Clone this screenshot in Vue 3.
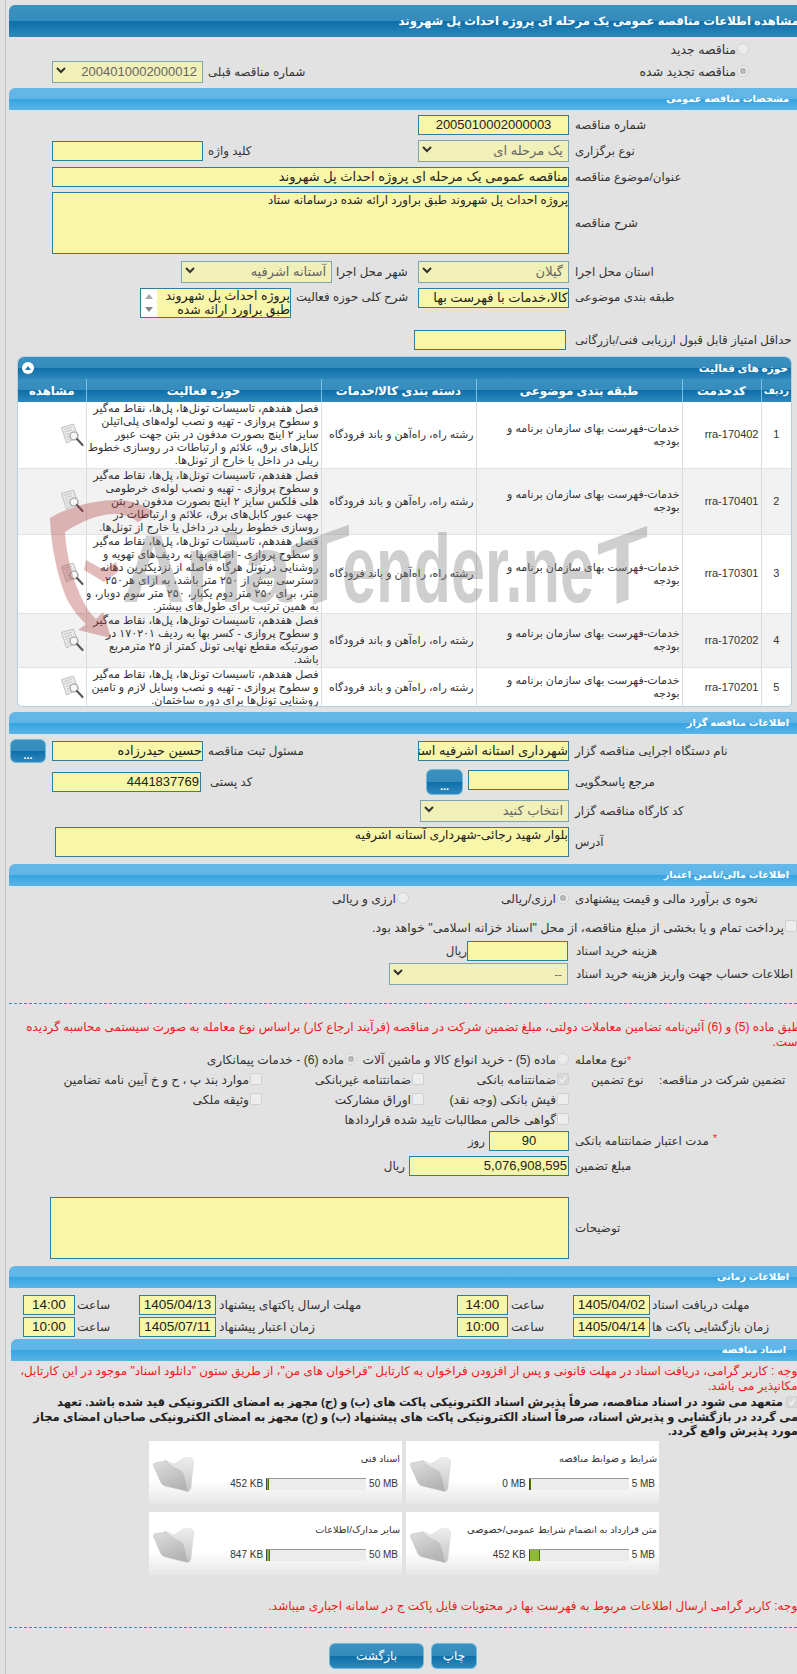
<script setup>
const f1 = 'فصل هفدهم، تاسیسات تونل‌ها، پل‌ها، نقاط مه‌گیر'
const rows = [
  { no: 1, code: 'rra-170402', cls: 'h1', lines: [f1, 'و سطوح پروازی - تهیه و نصب لوله‌های پلی‌اتیلن', 'سایز ۲ اینچ بصورت مدفون در بتن جهت عبور', 'کابل‌های برق، علائم و ارتباطات در روسازی خطوط', 'ریلی در داخل یا خارج از تونل‌ها.'] },
  { no: 2, code: 'rra-170401', cls: 'h1 alt', lines: [f1, 'و سطوح پروازی - تهیه و نصب لوله‌ی خرطومی', 'هلی فلکس سایز ۲ اینچ بصورت مدفون در بتن', 'جهت عبور کابل‌های برق، علائم و ارتباطات در', 'روسازی خطوط ریلی در داخل یا خارج از تونل‌ها.'] },
  { no: 3, code: 'rra-170301', cls: 'h2', lines: [f1, 'و سطوح پروازی - اضافه‌بها به ردیف‌های تهویه و', 'روشنایی درتونل هرگاه فاصله از نزدیکترین دهانه', 'دسترسی بیش از ۲۵۰ متر باشد، به ازای هر۲۵۰', 'متر، برای ۲۵۰ متر دوم یکبار، ۲۵۰ متر سوم دوبار، و', 'به همین ترتیب برای طول‌های بیشتر.'] },
  { no: 4, code: 'rra-170202', cls: 'h3 alt', lines: [f1, 'و سطوح پروازی - کسر بها به ردیف ۱۷۰۲۰۱ در', 'صورتیکه مقطع نهایی تونل کمتر از ۲۵ مترمربع', 'باشد.'] },
  { no: 5, code: 'rra-170201', cls: 'h4', lines: [f1, 'و سطوح پروازی - تهیه و نصب وسایل لازم و تامین', 'روشنایی تونل‌ها برای دوره ساختمان.'] }
]
const cards = [
  { t: 'اسناد فنی', cur: '452 KB', max: '50 MB', pct: 1 },
  { t: 'شرایط و ضوابط مناقصه', cur: '0 MB', max: '5 MB', pct: 0 },
  { t: 'سایر مدارک/اطلاعات', cur: '847 KB', max: '50 MB', pct: 2 },
  { t: 'متن قرارداد به انضمام شرایط عمومی/خصوصی', cur: '452 KB', max: '5 MB', pct: 9 }
]
</script>

<template>
  <div class="page">
    <div class="hd-main">مشاهده اطلاعات مناقصه عمومی یک مرحله ای پروژه احداث پل شهروند</div>

    <div class="two r-top mt4">
      <label class="c6 opt top-opt"><input class="rd" type="radio" disabled /><span>مناقصه جدید</span></label>
    </div>
    <div class="two mt2">
      <div class="c2 ctl sel num"><svg class="chev" viewBox="0 0 10 7"><path d="M1 1l4 4 4-4" /></svg><span>2004010002000012</span></div>
      <div class="c3 lb pl5">شماره مناقصه قبلی</div>
      <label class="c6 opt top-opt"><input class="rd" type="radio" disabled checked /><span>مناقصه تجدید شده</span></label>
    </div>

    <div class="hd-sec mt5">مشخصات مناقصه عمومی</div>

    <div class="two mt5">
      <div class="c4 ctl inp num ctr">2005010002000003</div>
      <div class="c6 lb">شماره مناقصه</div>
    </div>
    <div class="two mt5">
      <div class="c2 ctl inp"></div>
      <div class="c3 lb pl5">کلید واژه</div>
      <div class="c4 ctl sel big"><svg class="chev" viewBox="0 0 10 7"><path d="M1 1l4 4 4-4" /></svg><span>یک مرحله ای</span></div>
      <div class="c6 lb">نوع برگزاری</div>
    </div>
    <div class="two mt5">
      <div class="c24 ctl inp big">مناقصه عمومی یک مرحله ای پروژه احداث پل شهروند</div>
      <div class="c6 lb">عنوان/موضوع مناقصه</div>
    </div>
    <div class="two mt5">
      <div class="c24 ctl inp area62">پروژه احداث پل شهروند طبق براورد ارائه شده درسامانه ستاد</div>
      <div class="c6 lb">شرح مناقصه</div>
    </div>
    <div class="two mt7">
      <div class="c23 city">
        <div class="ctl sel big w151"><svg class="chev" viewBox="0 0 10 7"><path d="M1 1l4 4 4-4" /></svg><span>آستانه اشرفیه</span></div>
        <div class="lb">شهر محل اجرا</div>
      </div>
      <div class="c4 ctl sel big"><svg class="chev" viewBox="0 0 10 7"><path d="M1 1l4 4 4-4" /></svg><span>گیلان</span></div>
      <div class="c6 lb">استان محل اجرا</div>
    </div>
    <div class="two mt5 tops">
      <div class="c23 area-row">
        <div class="listbox">
          <div class="lb-scroll"><i class="up"></i><i class="dn"></i></div>
          <div class="lb-text"><div>پروژه احداث پل شهروند</div><div>طبق براورد ارائه شده</div></div>
        </div>
        <div class="lb lb-high">شرح کلی حوزه فعالیت</div>
      </div>
      <div class="c4 ctl inp big">کالا،خدمات با فهرست بها</div>
      <div class="c6 lb lb-high">طبقه بندی موضوعی</div>
    </div>
    <div class="two mt12">
      <div class="c4 ctl inp score"></div>
      <div class="c6 lb">حداقل امتیاز قابل قبول ارزیابی فنی/بازرگانی</div>
    </div>

    <div class="panel">
      <div class="panel-title">
        <span class="collapse"><i></i></span>
        <span>حوزه های فعالیت</span>
      </div>
      <table class="grid">
        <colgroup>
          <col class="k1" /><col class="k2" /><col class="k3" /><col class="k4" /><col class="k5" /><col class="k6" />
        </colgroup>
        <thead>
          <tr><th class="th-no">ردیف</th><th>کدخدمت</th><th>طبقه بندی موضوعی</th><th>دسته بندی کالا/خدمات</th><th>حوزه فعالیت</th><th>مشاهده</th></tr>
        </thead>
        <tbody>
          <tr v-for="r in rows" :key="r.no" :class="r.cls">
            <td class="ct">{{ r.no }}</td>
            <td class="code">{{ r.code }}</td>
            <td><div>خدمات-فهرست بهای سازمان برنامه و</div><div>بودجه</div></td>
            <td>رشته راه، راه‌آهن و باند فرودگاه</td>
            <td class="act"><div v-for="(l, i) in r.lines" :key="i">{{ l }}</div></td>
            <td class="view">
              <svg class="doc" viewBox="0 0 24 24">
                <path class="doc-sheet" d="M1.500 4.500L13.500 1l4.500 13-11.500 6z" />
                <path class="doc-line" d="M4 6.500l8-2.500M4.800 9l7-2.200M5.500 11.500l4-1.300M6.500 14l2.500-.8M7.200 16.500l2-.7" />
                <circle class="doc-lens" cx="14" cy="13" r="4" />
                <path class="doc-handle" d="M17 16l5.500 6" />
              </svg>
            </td>
          </tr>
        </tbody>
      </table>
    </div>

    <div class="hd-sec mt5">اطلاعات مناقصه گزار</div>

    <div class="two h24 mt5">
      <button class="btn-more more-a c1" type="button">...</button>
      <div class="c2 ctl inp big">حسین حیدرزاده</div>
      <div class="c3 lb pl5">مسئول ثبت مناقصه</div>
      <div class="c4 ctl inp big">شهرداری استانه اشرفیه استان گیلان</div>
      <div class="c6 lb">نام دستگاه اجرایی مناقصه گزار</div>
    </div>
    <div class="two h26 mt6">
      <div class="c2 ctl inp num postal">4441837769</div>
      <div class="c3 lb pl7">کد پستی</div>
      <div class="c4 ref">
        <button class="btn-more more-b" type="button">...</button>
        <div class="ctl inp ref-in"></div>
      </div>
      <div class="c6 lb">مرجع پاسخگویی</div>
    </div>
    <div class="two mt5">
      <div class="c4 ctl sel big wk"><svg class="chev" viewBox="0 0 10 7"><path d="M1 1l4 4 4-4" /></svg><span>انتخاب کنید</span></div>
      <div class="c6 lb">کد کارگاه مناقصه گزار</div>
    </div>
    <div class="two mt5">
      <div class="c24 ctl inp addr">بلوار شهید رجائی-شهرداری آستانه اشرفیه</div>
      <div class="c6 lb">آدرس</div>
    </div>

    <div class="hd-sec mt7">اطلاعات مالی/تامین اعتبار</div>

    <div class="two h18 mt4">
      <label class="c3 opt opt-b"><input class="rd" type="radio" disabled /><span>ارزی و ریالی</span></label>
      <label class="c4 opt"><input class="rd" type="radio" disabled checked /><span>ارزی/ریالی</span></label>
      <div class="c6 lb">نحوه ی برآورد مالی و قیمت پیشنهادی</div>
    </div>
    <div class="pay mt10">
      <span class="cb"></span>
      <span>پرداخت تمام و یا بخشی از مبلغ مناقصه، از محل "اسناد خزانه اسلامی" خواهد بود.</span>
    </div>
    <div class="two mt5">
      <div class="c4 price">
        <span class="unit">ریال</span>
        <div class="ctl inp price-in"></div>
      </div>
      <div class="c6 lb shift1">هزینه خرید اسناد</div>
    </div>
    <div class="two mt2">
      <div class="c34 ctl sel account"><svg class="chev" viewBox="0 0 10 7"><path d="M1 1l4 4 4-4" /></svg><span>--</span></div>
      <div class="c6 lb shift1">اطلاعات حساب جهت واریز هزینه خرید اسناد</div>
    </div>

    <div class="dash dash-a"></div>

    <div class="red red-top">
      <div>طبق ماده (5) و (6) آئین‌نامه تضامین معاملات دولتی، مبلغ تضمین شرکت در مناقصه (فرآیند ارجاع کار) براساس نوع معامله به صورت سیستمی محاسبه گردیده</div>
      <div>است.</div>
    </div>

    <div class="two h16 mt2">
      <div class="c24 deal">
        <label class="opt deal-a"><input class="rd" type="radio" disabled /><span>ماده (5) - خرید انواع کالا و ماشین آلات</span></label>
        <label class="opt"><input class="rd" type="radio" disabled checked /><span>ماده (6) - خدمات پیمانکاری</span></label>
      </div>
      <div class="c6 lb"><span class="star">*</span>نوع معامله</div>
    </div>

    <div class="two h16 mt4">
      <div class="c24 gtee">
        <label class="opt g1"><span class="cb on"><svg viewBox="0 0 12 12"><path d="M2.500 6.500l2.500 3 4.500-7" /></svg></span><span>ضمانتنامه بانکی</span></label>
        <label class="opt g2"><span class="cb"></span><span>ضمانتنامه غیربانکی</span></label>
        <label class="opt"><span class="cb"></span><span>موارد بند پ ، ح و خ آیین نامه تضامین</span></label>
      </div>
      <div class="c6 gt-labels">
        <span class="gt-type">نوع تضمین</span>
        <span class="gt-title">تضمین شرکت در مناقصه:</span>
      </div>
    </div>
    <div class="two h16 mt4">
      <div class="c24 gtee">
        <label class="opt g1"><span class="cb"></span><span>فیش بانکی (وجه نقد)</span></label>
        <label class="opt g2"><span class="cb"></span><span>اوراق مشارکت</span></label>
        <label class="opt"><span class="cb"></span><span>وثیقه ملکی</span></label>
      </div>
    </div>
    <div class="two h16 mt4">
      <div class="c24 gtee">
        <label class="opt"><span class="cb"></span><span>گواهی خالص مطالبات تایید شده قراردادها</span></label>
      </div>
    </div>

    <div class="two mt3">
      <div class="c34 money">
        <span class="unit">روز</span>
        <div class="ctl inp num ctr w80">90</div>
      </div>
      <div class="c6 lb"><span class="star star-b">*</span>مدت اعتبار ضمانتنامه بانکی</div>
    </div>
    <div class="two mt5">
      <div class="c34 money">
        <span class="unit">ریال</span>
        <div class="ctl inp num w160">5,076,908,595</div>
      </div>
      <div class="c6 lb">مبلغ تضمین</div>
    </div>
    <div class="two mt21">
      <div class="c24 ctl inp area62 notes"></div>
      <div class="c6 lb">توضیحات</div>
    </div>

    <div class="hd-sec mt7">اطلاعات زمانی</div>

    <div class="time mt7">
      <div class="t2 ctl inp num ctr tm">14:00</div><div class="t3 lb">ساعت</div>
      <div class="t4 ctl inp num ctr tm">1405/04/13</div><div class="t5 lb">مهلت ارسال پاکتهای پیشنهاد</div>
      <div class="t6 ctl inp num ctr tm">14:00</div><div class="t7 lb">ساعت</div>
      <div class="t8 ctl inp num ctr tm">1405/04/02</div><div class="t9 lb">مهلت دریافت اسناد</div>
    </div>
    <div class="time mt2">
      <div class="t2 ctl inp num ctr tm">10:00</div><div class="t3 lb">ساعت</div>
      <div class="t4 ctl inp num ctr tm">1405/07/11</div><div class="t5 lb">زمان اعتبار پیشنهاد</div>
      <div class="t6 ctl inp num ctr tm">10:00</div><div class="t7 lb">ساعت</div>
      <div class="t8 ctl inp num ctr tm">1405/04/14</div><div class="t9 lb">زمان بازگشایی پاکت ها</div>
    </div>

    <div class="hd-sec hd-docs mt2">اسناد مناقصه</div>

    <div class="red red-docs">
      <div>توجه : کاربر گرامی، دریافت اسناد در مهلت قانونی و پس از افزودن فراخوان به کارتابل "فراخوان های من"، از طریق ستون "دانلود اسناد" موجود در این کارتابل،</div>
      <div>امکانپذیر می باشد.</div>
    </div>

    <div class="pledge">
      <div class="pl-1"><span class="cb on"><svg viewBox="0 0 12 12"><path d="M2.500 6.500l2.500 3 4.500-7" /></svg></span><span>متعهد می شود در اسناد مناقصه، صرفاً پذیرش اسناد الکترونیکی پاکت های (ب) و (ج) مجهز به امضای الکترونیکی قید شده باشد. تعهد</span></div>
      <div>می گردد در بازگشایی و پذیرش اسناد، صرفاً اسناد الکترونیکی پاکت های پیشنهاد (ب) و (ج) مجهز به امضای الکترونیکی صاحبان امضای مجاز</div>
      <div>مورد پذیرش واقع گردد.</div>
    </div>

    <div class="cards">
      <div v-for="c in cards" :key="c.t" class="card">
        <svg class="folder" viewBox="0 0 41 36">
          <defs>
            <linearGradient id="fdFront" x1="0" y1="0" x2="0.5" y2="1">
              <stop offset="0" stop-color="#dedede" />
              <stop offset="1" stop-color="#b4b4b4" />
            </linearGradient>
            <linearGradient id="fdBack" x1="0" y1="0" x2="0" y2="1">
              <stop offset="0" stop-color="#eeeeee" />
              <stop offset="1" stop-color="#c4c4c4" />
            </linearGradient>
          </defs>
          <path class="fd-back" d="M12 4l9 4 10-6c5-1.500 10 0 9.500 4L38 31c-.4 3.500-2 4.800-5 4.200z" />
          <path class="fd-front" d="M.5 9.500c-.5-1.500.5-2.500 2-2.700L13 5c3 3.500 7 6.500 12 8.500 3 1.200 4.500 2.500 5.500 5L35 35.500 12.500 30c-2.500-.6-4-2-4.800-4z" />
        </svg>
        <div class="card-title">{{ c.t }}</div>
        <div class="usage">
          <span class="use-t">{{ c.max }}</span>
          <div class="bar"><i class="fill" :style="{ width: c.pct + 'px' }"></i></div>
          <span class="use-t">{{ c.cur }}</span>
        </div>
      </div>
    </div>

    <div class="red red-last">توجه: کاربر گرامی ارسال اطلاعات مربوط به فهرست بها در محتویات فایل پاکت ج در سامانه اجباری میباشد.</div>

    <div class="dash dash-b"></div>

    <div class="actions">
      <button class="btn" type="button">بازگشت</button>
      <button class="btn print" type="button">چاپ</button>
    </div>

    <svg class="mark" viewBox="0 0 797 200">
      <path class="mark-red" d="M50 28C70 16 95 10 118 10c12 0 24 4 36 12l-16 10c-8-6-16-8-24-8-16 0-34 8-49 18 1 20 7 48 19 71 3 6 7 11 12 16l7-7 8 26-33-8 8-6c-7-6-12-13-17-21C60 96 51 60 50 28z" />
      <path class="mark-red" d="M86 70l18 10 12-8 3 9-15 11-20-12z" />
      <text class="mark-text" x="122" y="112" textLength="170" lengthAdjust="spacingAndGlyphs">Aria</text>
      <g transform="translate(320 112) skewY(-20)">
        <text class="mark-text" x="-30" y="0" textLength="60" lengthAdjust="spacingAndGlyphs">T</text>
      </g>
      <text class="mark-text" x="342" y="112" textLength="252" lengthAdjust="spacingAndGlyphs">ender.ne</text>
      <g transform="translate(622 112) skewY(-20)">
        <text class="mark-text" x="-25" y="0" textLength="51" lengthAdjust="spacingAndGlyphs">T</text>
      </g>
    </svg>
  </div>
</template>

<style>
html, body { margin: 0; padding: 0; background: #e2e2e2; }
</style>

<style scoped>
.page {
  position: relative;
  width: 797px;
  height: 1674px;
  overflow: hidden;
  padding-top: 5px;
  box-sizing: border-box;
  background: linear-gradient(90deg, #e2e2e2 5px, #c6c6c6 5px, #c6c6c6 6px, #e2e2e2 6px);
  font-family: "Liberation Sans", "DejaVu Sans", sans-serif;
  font-size: 11.8px;
  color: #333;
}
.mt2 { margin-top: 2px; } .mt3 { margin-top: 3px; } .mt4 { margin-top: 4px; } .mt5 { margin-top: 5px; }
.mt6 { margin-top: 6px; } .mt7 { margin-top: 7px; } .mt10 { margin-top: 10px; } .mt12 { margin-top: 12px; } .mt21 { margin-top: 21px; }

.hd-main, .hd-sec {
  margin-left: 9px;
  direction: rtl;
  color: #fff;
  font-weight: 700;
  white-space: nowrap;
  border-radius: 6px 0 0 0;
}
.hd-main {
  height: 32px;
  line-height: 32px;
  margin-right: -2px;
  font-size: 11.6px;
  background: linear-gradient(#3a90bf 0, #358cbc 49%, #0d6ea9 50%, #2f88bb 100%);
}
.hd-sec {
  height: 22px;
  line-height: 22px;
  padding-right: 8px;
  font-size: 9.8px;
  background: linear-gradient(#64b8e8 0, #5eb5e8 48%, #35a3e0 49%, #5ab5e8 100%);
}
.hd-docs { margin-left: 11px; padding-right: 11px; }

.two {
  display: grid;
  grid-template-columns: 52px 151px 215px 151px 6px minmax(0, 1fr);
  align-items: center;
}
.tops { align-items: start; }
.r-top { height: 18px; }
.h16 { height: 16px; } .h18 { height: 18px; } .h24 { height: 24px; } .h26 { height: 26px; }
.c1 { grid-column: 1; } .c2 { grid-column: 2; } .c3 { grid-column: 3; } .c4 { grid-column: 4; } .c6 { grid-column: 6; }
.c23 { grid-column: 2 / 4; } .c24 { grid-column: 2 / 5; } .c34 { grid-column: 3 / 5; }

.lb { direction: rtl; white-space: nowrap; justify-self: start; line-height: 16px; }
.pl5 { padding-left: 5px; }
.pl7 { padding-left: 7px; }
.lb-high { margin-top: 1px; }
.shift1 { margin-left: 1px; }

.ctl { box-sizing: border-box; min-width: 0; overflow: hidden; white-space: nowrap; direction: rtl; }
.inp {
  height: 20px;
  line-height: 18px;
  background: #f8f6a8;
  border: 1px solid #2f7f98;
  color: #222;
}
.big { font-size: 13px; }
.num { font-size: 13px; direction: ltr; text-align: right; padding-right: 1px; }
.ctr { text-align: center; padding: 0; }
.sel {
  height: 22px;
  line-height: 20px;
  display: flex;
  direction: ltr;
  justify-content: space-between;
  align-items: center;
  padding: 0 5px 0 3px;
  background: #f1f0b8;
  border: 1px solid #7ea5b6;
  color: #666;
}
.sel span { direction: rtl; }
.chev { width: 10px; height: 7px; flex: none; margin-top: -3px; }
.chev path { fill: none; stroke: #333; stroke-width: 2; }
.w151 { width: 151px; flex: none; }
.w80 { width: 80px; }
.w160 { width: 160px; }
.area62 { height: 62px; line-height: 15px; }
.notes { margin-left: -2px; }
.city { display: flex; align-items: center; gap: 4px; padding-left: 129px; }
.area-row { display: flex; align-items: flex-start; gap: 5px; padding-left: 88px; }
.listbox {
  width: 151px;
  height: 30px;
  flex: none;
  box-sizing: border-box;
  display: flex;
  border: 1px solid #2f7f98;
  background: #f8f6a8;
  overflow: hidden;
}
.lb-scroll { width: 16px; flex: none; background: #fff; position: relative; }
.lb-scroll i { position: absolute; left: 4px; width: 0; height: 0; border-left: 4px solid transparent; border-right: 4px solid transparent; }
.lb-scroll .up { top: 5px; border-bottom: 5px solid #aaa; }
.lb-scroll .dn { top: 18px; border-top: 5px solid #888; }
.lb-text { flex: 1; direction: rtl; line-height: 14px; white-space: nowrap; font-size: 12.5px; color: #222; }
.score { margin: 0 3px 0 -4px; }
.postal { width: 149px; padding-right: 1px; }
.ref { display: flex; align-items: flex-start; gap: 5px; padding-left: 8px; height: 26px; }
.ref-in { width: 101px; flex: none; margin-top: 1px; }
.wk { margin-left: 2px; }
.addr { height: 30px; margin-left: 3px; line-height: 15px; font-size: 12.3px; }
.price { display: flex; align-items: center; justify-content: flex-end; padding-right: 1px; }
.price-in { width: 101px; flex: none; }
.unit { direction: rtl; margin-right: 4px; white-space: nowrap; }
.price .unit { margin-right: 0; }
.account { margin-left: 186px; margin-right: 1px; }
.money { display: flex; align-items: center; justify-content: flex-end; }

.opt { display: flex; direction: rtl; align-items: center; gap: 1px; white-space: nowrap; line-height: 16px; font-size: 12.2px; }
.top-opt { padding-right: 48px; font-size: 12.5px; }
.opt-b { padding-right: 9px; }
.rd {
  appearance: none;
  width: 12px;
  height: 12px;
  margin: -3px 0 0 0;
  flex: none;
  box-sizing: border-box;
  border: 1px solid #d2d2d2;
  border-radius: 50%;
  background: #ececec;
}
.rd:checked { background: radial-gradient(circle, #b8b8b8 0 3px, #ececec 3.5px); }
.cb {
  display: inline-block;
  width: 12px;
  height: 12px;
  flex: none;
  box-sizing: border-box;
  border: 1px solid #d0d0d0;
  border-radius: 2px;
  background: #ededed;
  margin-top: -3px;
}
.cb.on { background: #d9d9d9; }
.cb svg { display: block; width: 10px; height: 10px; }
.cb svg path { fill: none; stroke: #f4f4f4; stroke-width: 2; }
.pay {
  display: flex;
  direction: rtl;
  align-items: center;
  gap: 1px;
  height: 18px;
  white-space: nowrap;
  font-size: 12.4px;
}
.deal { display: flex; direction: rtl; }
.deal-a { width: 212px; }
.star { color: #e33; }
.star-b { margin-left: 4px; position: relative; top: -3px; }
.gtee { display: flex; direction: rtl; }
.g1 { width: 145px; }
.g2 { width: 162px; }
.gt-labels { display: flex; direction: ltr; white-space: nowrap; }
.gt-type { width: 68px; margin-left: 16px; direction: rtl; flex: none; text-align: left; }
.gt-title { direction: rtl; }

.panel {
  position: relative;
  margin: 6px 5px 0 17px;
  height: 351px;
  box-sizing: border-box;
  border: 1px solid #b4d0e0;
  border-radius: 7px 7px 5px 5px;
  background: #fff;
  overflow: hidden;
}
.panel-title {
  display: flex;
  direction: rtl;
  justify-content: space-between;
  align-items: center;
  height: 22px;
  padding: 0 3px 0 4px;
  color: #fff;
  font-weight: 700;
  font-size: 10.5px;
  background: linear-gradient(#3a90bf 0, #358cbc 49%, #0d6ea9 50%, #2f88bb 100%);
}
.collapse { order: 2; width: 12px; height: 12px; border-radius: 50%; background: #fff; display: flex; align-items: center; justify-content: center; }
.collapse i { width: 0; height: 0; border-left: 3.5px solid transparent; border-right: 3.5px solid transparent; border-bottom: 4px solid #1c78ae; }
.grid { width: 773px; table-layout: fixed; border-collapse: collapse; direction: rtl; font-size: 11px; }
.k1 { width: 30px; } .k2 { width: 79px; } .k3 { width: 206px; } .k4 { width: 155px; } .k5 { width: 235px; } .k6 { width: 68px; }
.grid th {
  height: 23px;
  padding: 0;
  color: #fff;
  font-weight: 700;
  font-size: 11.8px;
  white-space: nowrap;
  overflow: hidden;
  border-left: 1px solid #79c1e4;
  background: linear-gradient(#3a90bf 0, #358cbc 49%, #0d6ea9 50%, #2f88bb 100%);
}
.grid .th-no { font-size: 9.5px; }
.grid th:last-child { border-left: 0; }
.grid td {
  padding: 0 2px;
  border-left: 1px solid #dcdcdc;
  border-bottom: 1px solid #e2e2e2;
  line-height: 13px;
  white-space: nowrap;
  overflow: hidden;
  vertical-align: middle;
  box-sizing: border-box;
}
.grid td:last-child { border-left: 0; }
.grid .alt td { background: #f2f2f2; }
.grid .h1 { height: 66px; }
.grid .h2 { height: 79px; }
.grid .h3 { height: 54px; }
.grid .h4 { height: 40px; }
.ct { text-align: center; font-size: 11px; }
.code { font-size: 11px; }
.act { font-size: 11.1px; }
.view { text-align: left; }
.doc { display: block; width: 24px; height: 24px; margin-left: 42px; }
.doc-sheet { fill: #e9e9e9; stroke: #b4b4b4; stroke-width: 0.8; }
.doc-line { fill: none; stroke: #bcbcbc; stroke-width: 0.8; }
.doc-lens { fill: rgba(255, 255, 255, .65); stroke: #9a9a9a; stroke-width: 1.2; }
.doc-handle { stroke: #5c5c5c; stroke-width: 2.2; stroke-linecap: round; }

.btn-more {
  box-sizing: border-box;
  padding: 8px 0 0;
  border: 1px solid #6cbce0;
  border-radius: 6px;
  color: #fff;
  font: 700 11px/1 "Liberation Sans", sans-serif;
  background: linear-gradient(#3a90bf 0, #358cbc 49%, #0d6ea9 50%, #2f88bb 100%);
}
.more-a { width: 36px; height: 24px; margin-left: 10px; }
.more-b { width: 37px; height: 26px; flex: none; }

.time {
  display: grid;
  grid-template-columns: 23px 52px 64px 77px 241px 51px 65px 77px minmax(0, 1fr);
  align-items: center;
  font-size: 12.2px;
}
.t2 { grid-column: 2; } .t3 { grid-column: 3; padding-left: 2px; } .t4 { grid-column: 4; } .t5 { grid-column: 5; padding-left: 3px; }
.t6 { grid-column: 6; } .t7 { grid-column: 7; padding-left: 3px; } .t8 { grid-column: 8; } .t9 { grid-column: 9; padding-left: 2px; }
.tm { font-size: 13.5px; }

.dash { border-top: 1px dashed #3c8fc0; margin-left: 9px; }
.dash-a { margin-top: 18px; }
.dash-b { margin-top: 13px; }
.red { color: #f01818; direction: rtl; white-space: nowrap; margin-right: -4px; font-size: 12px; }
.red-top { margin-top: 16px; line-height: 15px; }
.red-docs { margin-top: 3px; line-height: 15px; }
.red-last { margin-top: 23px; line-height: 16px; }
.pledge {
  direction: rtl;
  white-space: nowrap;
  font-weight: 700;
  color: #222;
  line-height: 14.5px;
  font-size: 11.5px;
  margin-top: 1px;
  margin-right: -1px;
}
.pl-1 { display: flex; gap: 3px; align-items: center; }
.pl-1 .cb { margin-top: -1px; }

.cards {
  display: grid;
  grid-template-columns: 253px 253px;
  gap: 8px 4px;
  margin: 2px 0 0 149px;
}
.card {
  position: relative;
  height: 63px;
  box-sizing: border-box;
  padding: 11px 2px 0 0;
  background: linear-gradient(#fff 0, #fff 62%, #e7e7e7 100%);
  direction: rtl;
}
.card-title { line-height: 14px; white-space: nowrap; font-size: 9.7px; height: 14px; }
.folder { position: absolute; left: 4px; top: 15px; width: 41px; height: 36px; }
.fd-back { fill: url(#fdBack); stroke: #d2d2d2; stroke-width: .5; }
.fd-front { fill: url(#fdFront); stroke: #bdbdbd; stroke-width: .5; }
.usage { display: flex; align-items: center; gap: 3px; margin-top: 12px; padding-right: 2px; height: 12px; font-size: 10px; }
.use-t { white-space: nowrap; direction: ltr; }
.bar {
  position: relative;
  flex: none;
  width: 100px;
  height: 12px;
  box-sizing: border-box;
  background: #ececec;
  border-top: 1px solid #999;
  border-left: 1px solid #444;
  direction: ltr;
}
.fill { display: block; height: 100%; background: #8dbb2c; border-right: 1px solid #4d6b12; }

.actions { display: flex; gap: 7px; margin: 15px 0 0 329px; }
.btn {
  box-sizing: border-box;
  width: 95px;
  height: 26px;
  padding: 0;
  border: 1px solid #6cbce0;
  border-radius: 6px;
  color: #fff;
  font: 12px/1 "Liberation Sans", "DejaVu Sans", sans-serif;
  background: linear-gradient(#3a90bf 0, #358cbc 49%, #0d6ea9 50%, #2f88bb 100%);
}
.print { width: 46px; }

.mark { position: absolute; left: 0; top: 490px; width: 797px; height: 200px; pointer-events: none; }
.mark-red { fill: rgba(170, 50, 50, .33); }
.mark-text { font: 700 97px "Liberation Sans", sans-serif; fill: rgba(130, 130, 130, .38); }
</style>
